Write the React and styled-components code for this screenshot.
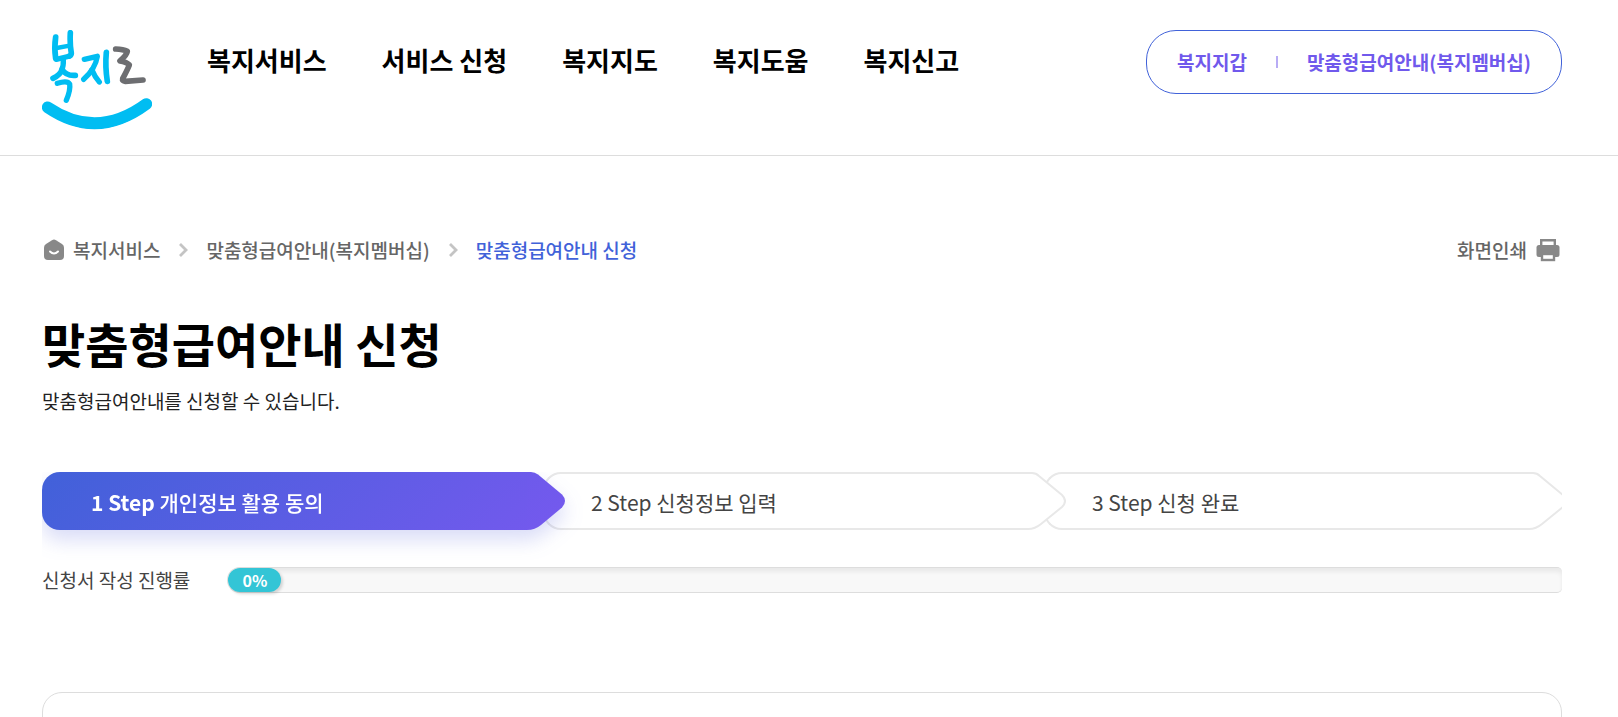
import React from 'react';
import styled, { createGlobalStyle, css } from 'styled-components';

const GlobalStyle = createGlobalStyle`
  *, *::before, *::after { box-sizing: border-box; }
  body {
    margin: 0;
    background: #fff;
    color: #000;
    font-family: 'Noto Sans CJK KR', 'Noto Sans', sans-serif;
    font-size: 19px;
    line-height: 28px;
  }
  h1, p, ol, ul { margin: 0; padding: 0; }
  ol, ul { list-style: none; }
  a { color: inherit; text-decoration: none; }
`;

const MENUS = ['복지서비스', '서비스 신청', '복지지도', '복지도움', '복지신고'];

const STEPS = [
  { no: '1 Step', label: '개인정보 활용 동의' },
  { no: '2 Step', label: '신청정보 입력' },
  { no: '3 Step', label: '신청 완료' },
];

const LogoMark = () => (
  <svg width="110" height="100" viewBox="36 30 330 300" fill="none" role="img" aria-label="복지로">
    <g stroke="#00bdf2" strokeLinecap="round" strokeLinejoin="round">
      <path d="M77 51 Q72 82 77 116" strokeWidth="17" />
      <path d="M121 38 Q119 72 124 100 Q124 106 118 108" strokeWidth="17" />
      <path d="M80 84 L119 77" strokeWidth="13" />
      <path d="M79 118 L120 108" strokeWidth="16" />
      <path d="M100 118 Q101 138 95 150" strokeWidth="16" />
      <path d="M69 175 Q92 164 96 148 Q108 168 136 166" strokeWidth="17" />
      <path d="M82 190 Q112 180 119 192 Q122 210 109 241" strokeWidth="16" />
      <path d="M163 118 L202 109 Q196 146 161 178" strokeWidth="16" />
      <path d="M186 150 Q195 172 208 186" strokeWidth="16" />
      <path d="M229 97 Q225 140 232 184" strokeWidth="17" />
      <path d="M53 262 Q200 362 349 252" strokeWidth="35" />
      <path d="M110 293 Q198 331 290 288" strokeWidth="32" />
    </g>
    <path
      d="M257 87 Q280 88 292 94 Q290 106 270 123 Q290 126 298 135 Q292 150 278 176 Q276 183 286 184 L339 180"
      stroke="#6d6e71"
      strokeWidth="17"
      strokeLinecap="round"
      strokeLinejoin="round"
    />
  </svg>
);

const HomeIcon = () => (
  <svg width="22" height="22" viewBox="0 0 22 22" aria-hidden="true">
    <path d="M10 1.2 Q12 0 14 1.2 L20 5 Q22 6.4 22 8.6 V17 Q22 21 18 21 H6 Q2 21 2 17 V8.6 Q2 6.4 4 5 Z" fill="#888" />
    <path d="M8 12.5 Q12 16.5 16 12.5" fill="none" stroke="#fff" strokeWidth="2" strokeLinecap="round" />
  </svg>
);

const ChevronIcon = () => (
  <svg width="10" height="16" viewBox="0 0 10 16" fill="none" aria-hidden="true">
    <path d="M2 2 L8 8 L2 14" stroke="#c4c4c4" strokeWidth="2.8" />
  </svg>
);

const PrinterIcon = () => (
  <svg width="24" height="24" viewBox="0 0 24 24" aria-hidden="true">
    <path d="M5.2 8 V2.2 H18.8 V8" fill="none" stroke="#888" strokeWidth="2.4" />
    <rect x="0.5" y="7" width="23" height="12" rx="2.5" fill="#888" />
    <rect x="6" y="16" width="12" height="6" fill="#fff" stroke="#888" strokeWidth="2.4" />
  </svg>
);

const StepTip = ({ active }) => (
  <svg width="38" height="58" viewBox="0 0 38 58" aria-hidden="true">
    <defs>
      <linearGradient id="tipFill" gradientUnits="userSpaceOnUse" x1="0" y1="0" x2="47" y2="47">
        <stop offset="0" stopColor="#6d5aeb" />
        <stop offset="1" stopColor="#7559ee" />
      </linearGradient>
    </defs>
    {active ? (
      <path d="M0 0 H4 Q8 0 11 2.5 L35 22.5 Q41 29 35 35.5 L14 53 Q8 58 0 58 Z" fill="url(#tipFill)" />
    ) : (
      <path
        d="M0 1 H4 Q8 1 11 4 L34 23 Q40 29 34 35 L13 52 Q7 57 0 57"
        fill="#fff"
        stroke="#e8e8e8"
        strokeWidth="2"
      />
    )}
  </svg>
);

const App = () => {
  const progress = 0;

  return (
    <>
      <GlobalStyle />
      <Header>
        <Logo href="#home">
          <LogoMark />
        </Logo>
        <nav>
          <Menu>
            {MENUS.map((menu) => (
              <li key={menu}>
                <a href="#menu">{menu}</a>
              </li>
            ))}
          </Menu>
        </nav>
        <Wallet>
          <a href="#wallet">복지지갑</a>
          <Divider />
          <a href="#membership">맞춤형급여안내(복지멤버십)</a>
        </Wallet>
      </Header>

      <Main>
        <LocationBar>
          <Breadcrumb>
            <Crumb href="#service">
              <HomeIcon />
              복지서비스
            </Crumb>
            <ChevronIcon />
            <Crumb href="#membership">맞춤형급여안내(복지멤버십)</Crumb>
            <ChevronIcon />
            <Crumb href="#apply" $current aria-current="page">
              맞춤형급여안내 신청
            </Crumb>
          </Breadcrumb>
          <PrintButton type="button">
            화면인쇄
            <PrinterIcon />
          </PrintButton>
        </LocationBar>

        <Title>맞춤형급여안내 신청</Title>
        <Description>맞춤형급여안내를 신청할 수 있습니다.</Description>

        <StepArea>
          <StepList>
            {STEPS.map((step, index) => (
              <Step key={step.no} $active={index === 0} $order={STEPS.length - index}>
                <StepBody $active={index === 0}>
                  <StepNo $active={index === 0}>{step.no}</StepNo> {step.label}
                </StepBody>
                <StepTip active={index === 0} />
              </Step>
            ))}
          </StepList>
        </StepArea>

        <ProgressRow>
          <span id="progressLabel">신청서 작성 진행률</span>
          <Track
            role="progressbar"
            aria-labelledby="progressLabel"
            aria-valuenow={progress}
            aria-valuemin={0}
            aria-valuemax={100}
          >
            <Bar style={{ width: `${progress}%` }}>{progress}%</Bar>
          </Track>
        </ProgressRow>

        <Panel />
      </Main>
    </>
  );
};

// HEADER
const Header = styled.header`
  display: flex;
  align-items: flex-start;
  padding: 30px 56px 25px 42px;
  border-bottom: 1px solid #ddd;
`;

const Logo = styled.a`
  flex: none;
  margin-right: 55px;

  svg {
    display: block;
  }
`;

const Menu = styled.ul`
  display: flex;
  gap: 55px;
  padding-top: 11px;
  font-size: 26px;
  font-weight: 700;
  line-height: 38px;
  white-space: nowrap;
`;

const Wallet = styled.div`
  display: flex;
  align-items: center;
  gap: 29px;
  height: 64px;
  margin-left: auto;
  padding: 0 30px;
  border: 1px solid #4162d9;
  border-radius: 30px;
  color: #7059ec;
  font-weight: 700;
  white-space: nowrap;
`;

const Divider = styled.span`
  width: 2px;
  height: 12px;
  background: #b8acf5;
`;

// CONTENT
const Main = styled.main`
  padding: 80px 56px 0 42px;
`;

const LocationBar = styled.div`
  display: flex;
  align-items: center;
  justify-content: space-between;
  color: #666;
  font-weight: 500;
`;

const Breadcrumb = styled.nav`
  display: flex;
  align-items: center;
  gap: 18px;
`;

const Crumb = styled.a`
  display: flex;
  align-items: center;
  gap: 9px;
  ${(props) => props.$current && 'color: #4162d9;'}
`;

const PrintButton = styled.button`
  display: flex;
  align-items: center;
  gap: 9px;
  padding: 0 2px;
  border: 0;
  background: none;
  color: inherit;
  font: inherit;
  cursor: pointer;
`;

const Title = styled.h1`
  margin-top: 44px;
  font-size: 47px;
  font-weight: 700;
  line-height: 70px;
`;

const Description = styled.p`
  margin-top: 9px;
  color: #222;
`;

const StepArea = styled.div`
  margin-top: 57px;
  padding-bottom: 30px;
  overflow: hidden;
`;

const StepList = styled.ol`
  display: flex;
  margin-right: -5px;
`;

const Step = styled.li`
  position: relative;
  z-index: ${(props) => props.$order};
  display: flex;
  flex: 1;
  height: 58px;
  ${(props) => props.$active && 'filter: drop-shadow(0 10px 10px rgba(65, 80, 217, 0.2));'}

  & + & {
    margin-left: -22px;
  }

  svg {
    flex: none;
  }
`;

const StepBody = styled.div`
  flex: 1;
  padding: 0 46px;
  border: 2px solid #e8e8e8;
  border-right: 0;
  border-radius: 18px 0 0 18px;
  background: #fff;
  color: #444;
  font-size: 21px;
  line-height: 56px;
  white-space: nowrap;
  ${(props) =>
    props.$active &&
    css`
      padding: 0 49px;
      border: 0;
      background: linear-gradient(135deg, #4161d9, #7559ee) 0 0 / calc(100% + 38px) 100%;
      color: #fff;
      font-weight: 500;
      line-height: 60px;
    `}
`;

const StepNo = styled.span`
  font-weight: ${(props) => (props.$active ? 700 : 400)};
`;

const ProgressRow = styled.div`
  display: flex;
  align-items: center;
  gap: 37px;
  margin-top: 6px;
  color: #444;
  white-space: nowrap;
`;

const Track = styled.div`
  flex: 1;
  height: 26px;
  border: 1px solid #ddd;
  border-right: 0;
  border-radius: 13px 5px 5px 13px;
  background: #f8f8f8;
  box-shadow: inset 0 4px 4px rgba(0, 0, 0, 0.06);
`;

const Bar = styled.div`
  min-width: 53px;
  height: 24px;
  border-radius: 12px;
  background: #33c5d6;
  box-shadow: 2px 2px 3px rgba(0, 0, 0, 0.15);
  color: #fff;
  font-size: 16px;
  font-weight: 700;
  line-height: 24px;
  text-align: center;
`;

const Panel = styled.section`
  min-height: 240px;
  margin-top: 98px;
  border: 1px solid #ddd;
  border-radius: 20px;
`;

export default App;
